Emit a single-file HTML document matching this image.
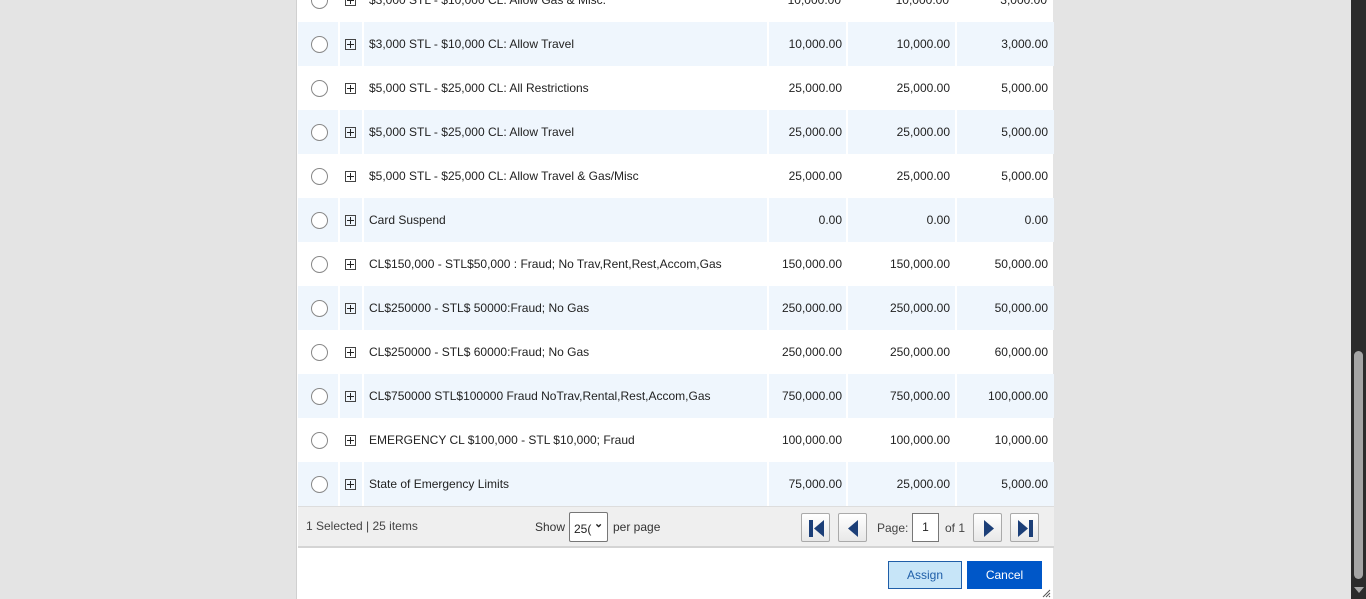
<!DOCTYPE html>
<html><head><style>
*{margin:0;padding:0;box-sizing:border-box}
body{width:1366px;height:599px;overflow:hidden;background:#e4e4e4;font-family:"Liberation Sans",Arial,sans-serif;font-size:12px;color:#222;position:relative}
.panel{position:absolute;left:296px;top:0;width:757px;height:599px;background:#fff;border-left:1px solid #d0d0d0}
.row{position:absolute;left:1px;width:756px;height:44px}
.row.alt{background:#eff6fd}
.row.alt .sep{position:absolute;top:0;width:2px;height:44px;background:#fff}
.radio{position:absolute;left:13px;top:14px;width:17px;height:17px;border:1px solid #888;border-radius:50%;background:#fff}
.plus{position:absolute;left:47px;top:17px;width:11px;height:11px;border:1px solid #444}
.plus:before{content:"";position:absolute;left:1px;top:4px;width:7px;height:1px;background:#222}
.plus:after{content:"";position:absolute;left:4px;top:1px;width:1px;height:7px;background:#222}
.name{position:absolute;left:71px;top:15px;white-space:nowrap}
.n{position:absolute;top:15px;text-align:right;width:90px}
.foot{position:absolute;left:1px;top:506px;width:756px;height:42px;background:#efefef;border-top:1px solid #ddd;border-bottom:2px solid #d4d4d4}
.pb{position:absolute;top:6px;width:29px;height:29px;border:1px solid #aaa;border-radius:2px;background:linear-gradient(#fff,#e8e8e8)}
.sb{position:absolute;left:1351px;top:0;width:15px;height:599px;background:#2b2b2b}
.th{position:absolute;left:3px;top:351px;width:9px;height:228px;background:#a5a5a5;border-radius:5px}
</style></head><body>
<div class="panel">
<div class="row" style="top:-22px"><div class="radio"></div><div class="plus"></div><div class="name">$3,000 STL - $10,000 CL: Allow Gas &amp; Misc.</div><div class="n" style="left:453px">10,000.00</div><div class="n" style="left:561px">10,000.00</div><div class="n" style="left:659px">3,000.00</div></div>
</div>
<div class="sb"><div class="th"></div><div style="position:absolute;left:3px;top:587px;width:0;height:0;border-left:5px solid transparent;border-right:5px solid transparent;border-top:6px solid #a5a5a5"></div></div>
<script>
var rows=[["$3,000 STL - $10,000 CL: Allow Travel","10,000.00","10,000.00","3,000.00"],
["$5,000 STL - $25,000 CL: All Restrictions","25,000.00","25,000.00","5,000.00"],
["$5,000 STL - $25,000 CL: Allow Travel","25,000.00","25,000.00","5,000.00"],
["$5,000 STL - $25,000 CL: Allow Travel &amp; Gas/Misc","25,000.00","25,000.00","5,000.00"],
["Card Suspend","0.00","0.00","0.00"],
["CL$150,000 - STL$50,000 : Fraud; No Trav,Rent,Rest,Accom,Gas","150,000.00","150,000.00","50,000.00"],
["CL$250000 - STL$ 50000:Fraud; No Gas","250,000.00","250,000.00","50,000.00"],
["CL$250000 - STL$ 60000:Fraud; No Gas","250,000.00","250,000.00","60,000.00"],
["CL$750000 STL$100000 Fraud NoTrav,Rental,Rest,Accom,Gas","750,000.00","750,000.00","100,000.00"],
["EMERGENCY CL $100,000 - STL $10,000; Fraud","100,000.00","100,000.00","10,000.00"],
["State of Emergency Limits","75,000.00","25,000.00","5,000.00"]];
var h="";
rows.forEach(function(r,i){h+='<div class="row'+(i%2==0?' alt':'')+'" style="top:'+(22+i*44)+'px"><div class="sep" style="left:40px"></div><div class="sep" style="left:64px"></div><div class="sep" style="left:469px"></div><div class="sep" style="left:548px"></div><div class="sep" style="left:657px"></div><div class="radio"></div><div class="plus"></div><div class="name">'+r[0]+'</div><div class="n" style="left:454px">'+r[1]+'</div><div class="n" style="left:562px">'+r[2]+'</div><div class="n" style="left:660px">'+r[3]+'</div></div>';});
h+='<div class="foot"><div style="position:absolute;left:8px;top:12px;color:#444">1 Selected | 25 items</div>'+
'<div style="position:absolute;left:237px;top:13px;color:#333">Show</div>'+
'<div style="position:absolute;left:271px;top:5px;width:39px;height:30px;border:1px solid #777;background:#fff;border-radius:2px"><span style="position:absolute;left:4px;top:9px">25(</span><span style="position:absolute;left:24px;top:4px;font-size:11px;font-weight:bold">&#8964;</span></div>'+
'<div style="position:absolute;left:315px;top:13px;color:#333">per page</div>'+
'<div class="pb" style="left:503px"><svg width="29" height="29"><rect x="7" y="6" width="4" height="17" fill="#1c3f78"/><path d="M22 6 L12 14.5 L22 23Z" fill="#1c3f78"/></svg></div>'+
'<div class="pb" style="left:540px"><svg width="29" height="29"><path d="M19 6 L9 14.5 L19 23Z" fill="#1c3f78"/></svg></div>'+
'<div style="position:absolute;left:579px;top:14px;color:#444">Page:</div>'+
'<div style="position:absolute;left:614px;top:6px;width:27px;height:29px;border:1px solid #777;background:#fff;text-align:center;line-height:27px">1</div>'+
'<div style="position:absolute;left:647px;top:14px;color:#444">of 1</div>'+
'<div class="pb" style="left:675px"><svg width="29" height="29"><path d="M10 6 L20 14.5 L10 23Z" fill="#1c3f78"/></svg></div>'+
'<div class="pb" style="left:712px"><svg width="29" height="29"><path d="M7 6 L17 14.5 L7 23Z" fill="#1c3f78"/><rect x="18" y="6" width="4" height="17" fill="#1c3f78"/></svg></div></div>'+
'<div style="position:absolute;left:591px;top:561px;width:74px;height:28px;background:#c7e5f8;border:1px solid #1f5ea8;color:#1f5ea8;text-align:center;line-height:26px">Assign</div>'+
'<div style="position:absolute;left:670px;top:561px;width:75px;height:28px;background:#0057c8;color:#fff;text-align:center;line-height:28px">Cancel</div>'+
'<svg style="position:absolute;left:745px;top:589px" width="9" height="9"><path d="M8 1 L1 8 M8 4 L4 8 M8 7 L7 8" stroke="#555"/></svg>';
document.querySelector('.panel').insertAdjacentHTML('beforeend',h);
</script>
</body></html>
